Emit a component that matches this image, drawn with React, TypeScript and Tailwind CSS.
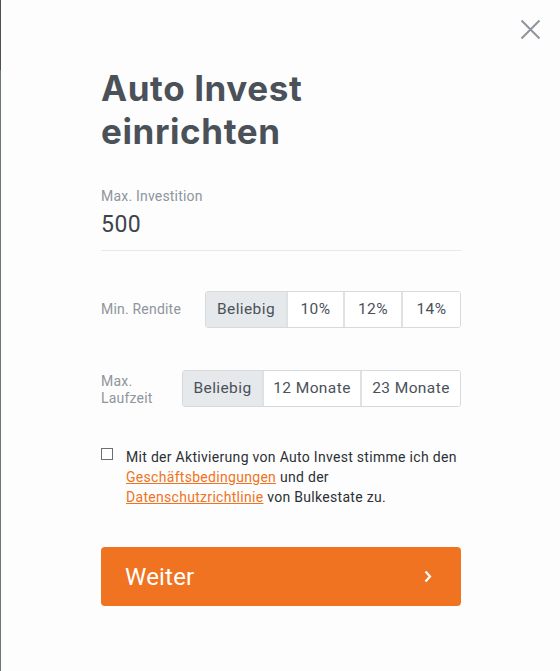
import React from "react";

function Segment({ items, widths, active = 0 }: { items: string[]; widths: number[]; active?: number }) {
  return (
    <div className="flex h-[37px] rounded-[3px] border border-[#d6dadd] overflow-hidden">
      {items.map((t, i) => (
        <div
          key={t}
          style={{ width: widths[i] }}
          className={
            "flex items-center justify-center text-[15.5px] tracking-[0.4px] text-[#4a5159] " +
            (i > 0 ? "border-l-2 border-[#dfe2e5] " : "") +
            (i === active ? "bg-[#e6e9ec]" : "bg-white")
          }
        >
          {t}
        </div>
      ))}
    </div>
  );
}

export default function App() {
  return (
    <div className="relative w-[560px] h-[671px] bg-[#fdfdfd] overflow-hidden" style={{ fontFamily: "Roboto, 'Liberation Sans', sans-serif" }}>
      <div className="absolute left-0 top-0 w-px h-[70px] bg-[#4b5159]" />
      <div className="absolute left-0 top-[70px] w-px bottom-0 bg-[#6c747b]" />
      <button className="absolute left-[520px] top-[19px] w-[21px] h-[21px]">
        <svg width="21" height="21" viewBox="0 0 21 21" fill="none" stroke="#8d949b" strokeWidth="2">
          <path d="M1.5 1.5 L19.5 19.5 M19.5 1.5 L1.5 19.5" />
        </svg>
      </button>

      <div className="ml-[101px] w-[360px] pt-[67px]">
        <h1
          className="text-[35px] leading-[43px] tracking-[0.6px] font-bold text-[#4a5159]"
          style={{ fontFamily: "Inter, 'Noto Sans', sans-serif" }}
        >
          Auto Invest
          <br />
          einrichten
        </h1>

        <div className="mt-[34px] text-[14px] leading-[18px] tracking-[0.2px] text-[#8e959c]">Max. Investition</div>
        <div className="mt-[5px] text-[23px] leading-[30px] tracking-[0.5px] text-[#3e444b] pb-[10px] border-b border-[#e6e8eb]">500</div>

        <div className="mt-[40px] flex items-center justify-between">
          <div className="text-[14px] leading-[18px] tracking-[0.2px] text-[#8e959c] -mt-[2px]">Min. Rendite</div>
          <Segment items={["Beliebig", "10%", "12%", "14%"]} widths={[80, 57, 58, 59]} />
        </div>

        <div className="mt-[42px] flex items-center justify-between">
          <div className="text-[14px] leading-[17px] tracking-[0.2px] text-[#8e959c] pt-[2px]">
            Max.
            <br />
            Laufzeit
          </div>
          <Segment items={["Beliebig", "12 Monate", "23 Monate"]} widths={[79, 98, 100]} />
        </div>

        <div className="mt-[40px] flex gap-[13px]">
          <div className="mt-[1px] w-[12px] h-[12px] border border-[#6b6f73] bg-white shrink-0" />
          <p className="text-[14px] leading-[20px] tracking-[0.3px] text-[#2c3035] whitespace-nowrap">
            Mit der Aktivierung von Auto Invest stimme ich den
            <br />
            <a className="text-[#f07322] underline">Geschäftsbedingungen</a> und der
            <br />
            <a className="text-[#f07322] underline">Datenschutzrichtlinie</a> von Bulkestate zu.
          </p>
        </div>

        <button className="mt-[40px] w-[360px] h-[59px] rounded-[4px] bg-[#f07322] flex items-center justify-between pl-[24px] pr-[29px]">
          <span className="text-[24px] tracking-[0.2px] text-white">Weiter</span>
          <svg width="8" height="13" viewBox="0 0 8 13" fill="none" stroke="white" strokeWidth="2.2">
            <path d="M1.5 1.5 L6 6.5 L1.5 11.5" />
          </svg>
        </button>
      </div>
    </div>
  );
}
